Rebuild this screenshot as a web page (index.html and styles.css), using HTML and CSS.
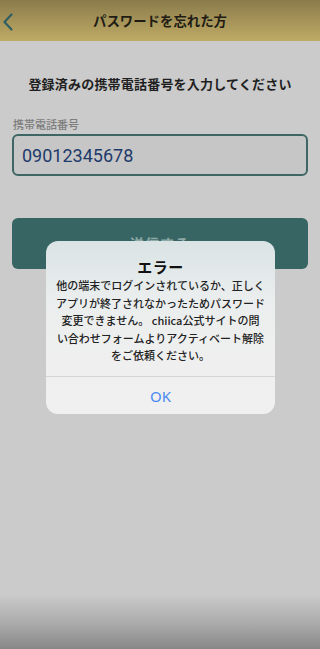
FILE: index.html
```html
<!DOCTYPE html>
<html lang="ja">
<head>
<meta charset="utf-8">
<link rel="stylesheet" href="styles.css">
</head>
<body>
<div class="screen">
  <header class="header">
    <svg class="back" width="12" height="18" viewBox="0 0 12 18"><path d="M9.5 1.5 L2.5 9 L9.5 16.5" fill="none" stroke="#2f5f62" stroke-width="2.2" stroke-linecap="round" stroke-linejoin="round"/></svg>
    <h1 class="title">パスワードを忘れた方</h1>
  </header>
  <main class="content">
    <p class="lead">登録済みの携帯電話番号を入力してください</p>
    <label class="label">携帯電話番号</label>
    <div class="input">09012345678</div>
    <div class="button">送信する</div>
  </main>
  <div class="dialog">
    <div class="dialog-body">
      <div class="dialog-title">エラー</div>
      <div class="dialog-msg">他の端末でログインされているか、正しく<br>アプリが終了されなかったためパスワード<br>変更できません。 chiica公式サイトの問<br>い合わせフォームよりアクティベート解除<br>をご依頼ください。</div>
    </div>
    <div class="dialog-btn">OK</div>
  </div>
</div>
</body>
</html>
```
FILE: styles.css
```css
html, body {
  margin: 0;
  padding: 0;
}
body {
  width: 320px;
  height: 649px;
  overflow: hidden;
  font-family: "Noto Sans CJK JP", "Noto Sans", sans-serif;
  background: linear-gradient(to bottom, #cbcbcb 0, #cbcbcb 594px, #a9a9a9 625px, #878787 649px);
}
.screen {
  position: relative;
  width: 320px;
  height: 649px;
}
.header {
  height: 41px;
  background: linear-gradient(to bottom, #8a7b4b, #bfab66);
  display: flex;
  align-items: center;
  justify-content: center;
  position: relative;
}
.back {
  position: absolute;
  left: 2px;
  top: 13px;
}
.title {
  margin: 0;
  font-size: 13.4px;
  font-weight: 700;
  color: #1e1c14;
  line-height: 1;
  padding-top: 1px;
}
.content {
  padding: 0 12px;
  display: flex;
  flex-direction: column;
}
.lead {
  margin: 34px 0 0;
  text-align: center;
  font-size: 13px;
  letter-spacing: 0.2px;
  font-weight: 700;
  color: #1f1f1f;
  line-height: 18px;
}
.label {
  margin-top: 25px;
  margin-left: 1px;
  font-size: 11px;
  color: #7d7d7d;
  line-height: 13px;
  font-weight: 500;
}
.input {
  margin-top: 3px;
  height: 38px;
  border: 2px solid #3d6664;
  border-radius: 6px;
  background: #c6c6c6;
  display: flex;
  align-items: center;
  padding-left: 8px;
  font-family: Roboto, "Liberation Sans", sans-serif;
  font-size: 18px;
  color: #1d3a6b;
}
.button {
  margin-top: 42px;
  height: 51px;
  border-radius: 6px;
  background: #376563;
  color: #8fa9a8;
  font-size: 14px;
  font-weight: 700;
  display: flex;
  justify-content: center;
  padding-top: 15px;
  box-sizing: border-box;
  letter-spacing: 1px;
}
.dialog {
  position: absolute;
  left: 46px;
  top: 241px;
  width: 229px;
  height: 173px;
  border-radius: 12px;
  background: linear-gradient(to bottom, #dae3e4 0, #ebeeee 60px, #efefef 120px, #f0f0f0 100%);
  display: flex;
  flex-direction: column;
  overflow: hidden;
}
.dialog-body {
  height: 136px;
  border-bottom: 1px solid #d6d6d6;
  text-align: center;
  padding-top: 15px;
  box-sizing: border-box;
}
.dialog-title {
  font-size: 15px;
  font-weight: 700;
  color: #111;
  line-height: 21px;
  letter-spacing: 0.5px;
}
.dialog-msg {
  margin-top: 0;
  font-size: 11px;
  line-height: 17.5px;
  color: #222;
  font-weight: 500;
}
.dialog-btn {
  flex: 1;
  display: flex;
  align-items: center;
  justify-content: center;
  font-family: "Noto Sans", sans-serif;
  font-size: 15px;
  color: #4a8af2;
}
```
